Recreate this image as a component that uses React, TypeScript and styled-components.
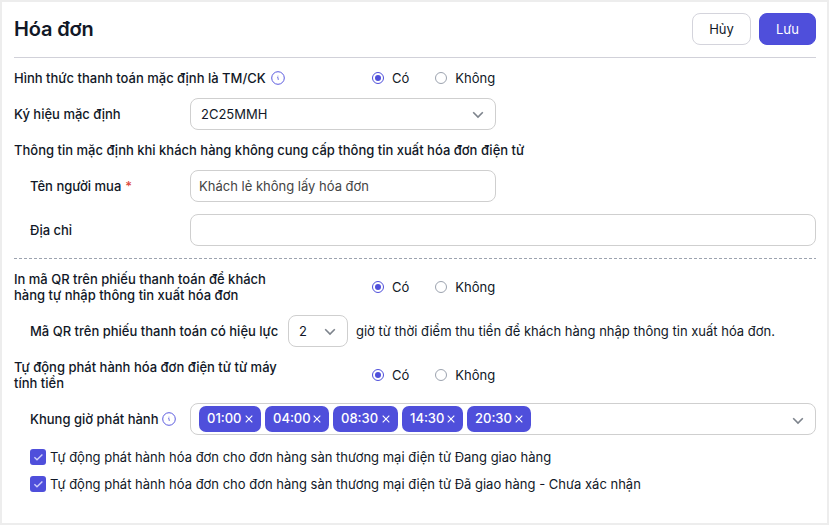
import React from "react";
import styled, { createGlobalStyle } from "styled-components";

const GlobalStyle = createGlobalStyle`
  * { box-sizing: border-box; }
  body { margin: 0; background: #ededed; }
  button, input { font: inherit; letter-spacing: inherit; }
`;

const Page = styled.main`
  width: 829px;
  height: 525px;
  padding: 0 11px 0 12px;
  border: 2px solid #ededed;
  background: #fff;
  color: #111827;
  font: 400 13px/16px Inter, "Noto Sans", sans-serif;
  white-space: nowrap;
  overflow: hidden;
`;

const Header = styled.header`
  display: flex;
  align-items: center;
  gap: 8px;
  height: 56px;
  padding-bottom: 1px;
  border-bottom: 1px solid #d1d1d9;
`;

const Title = styled.h1`
  margin: 0 auto 0 0;
  font-size: 20px;
  line-height: 28px;
  font-weight: 600;
  letter-spacing: -0.16px;
`;

const Button = styled.button<{ $primary?: boolean }>`
  width: ${(p) => (p.$primary ? 57 : 59)}px;
  height: 32px;
  padding: 0;
  border: 1px solid ${(p) => (p.$primary ? "#4d4dda" : "#d4d4dc")};
  border-radius: 8px;
  background: ${(p) => (p.$primary ? "#4f4fdb" : "#fff")};
  color: ${(p) => (p.$primary ? "#fff" : "#111827")};
  font-weight: 400;
`;

const Form = styled.form`
  display: flex;
  flex-direction: column;
`;

const Row = styled.div<{ $height?: number; $top: number; $indent?: boolean }>`
  display: flex;
  align-items: center;
  height: ${(p) => p.$height ?? 32}px;
  margin-top: ${(p) => p.$top}px;
  padding-left: ${(p) => (p.$indent ? 16 : 0)}px;
`;

const Label = styled.div<{ $width?: number }>`
  display: flex;
  align-items: center;
  flex: none;
  width: ${(p) => (p.$width ? p.$width + "px" : "auto")};
  font-weight: 500;
`;

const Required = styled.span`
  margin-left: 4px;
  color: #dc4a3d;
`;

const Info = styled.svg<{ $gap: number }>`
  flex: none;
  margin-left: ${(p) => p.$gap}px;
`;

const RadioGroup = styled.div`
  display: flex;
  gap: 26px;
`;

const RadioLabel = styled.label`
  display: flex;
  align-items: center;
  gap: 8px;
`;

const Dot = styled.span<{ $on?: boolean }>`
  display: grid;
  place-items: center;
  width: 12px;
  height: 12px;
  border: 1px solid ${(p) => (p.$on ? "#4f4fdb" : "#9ca3af")};
  border-radius: 50%;
  &::after {
    content: "";
    width: 6px;
    height: 6px;
    border-radius: 50%;
    background: ${(p) => (p.$on ? "#4f4fdb" : "transparent")};
  }
`;

const Field = styled.div<{ $width: number; $pad?: string }>`
  display: flex;
  align-items: center;
  justify-content: space-between;
  flex: none;
  width: ${(p) => p.$width}px;
  height: 32px;
  padding: ${(p) => p.$pad ?? "0 11px 0 10px"};
  border: 1px solid #cfcfcf;
  border-radius: 8px;
`;

const TextInput = styled.input<{ $width: number }>`
  width: ${(p) => p.$width}px;
  height: 32px;
  padding: 0 8px;
  border: 1px solid #cfcfcf;
  border-radius: 8px;
  outline: none;
  background: #fff;
  color: #444;
`;

const Divider = styled.hr`
  width: 100%;
  height: 1px;
  margin: 12px 0 0;
  border: 0;
  background: repeating-linear-gradient(to right, #9ca3af 0 3px, #fff 3px 5px);
`;

const Suffix = styled.span`
  margin-left: 8px;
  padding-bottom: 1px;
`;

const Tags = styled.div`
  display: flex;
  gap: 4px;
`;

const Tag = styled.span<{ $width: number }>`
  display: flex;
  align-items: center;
  justify-content: space-between;
  width: ${(p) => p.$width}px;
  height: 26px;
  padding: 0 8px 2px;
  border-radius: 7px;
  background: #4f4fdb;
  color: #fff;
  font-weight: 500;
`;

const CloseIcon = styled.svg`
  margin-top: 2px;
`;

const Arrow = styled.svg<{ $drop?: number }>`
  flex: none;
  margin-top: ${(p) => p.$drop ?? 1}px;
`;

const CheckLabel = styled.label`
  display: flex;
  align-items: center;
  gap: 4px;
`;

const Check = styled.span`
  display: grid;
  place-items: center;
  width: 16px;
  height: 16px;
  border-radius: 3px;
  background: #4f4fdb;
`;

const InfoIcon = ({ gap }: { gap: number }) => (
  <Info $gap={gap} width="14" height="14" viewBox="0 0 14 14" fill="none" stroke="#5b5bdf">
    <circle cx="7" cy="7" r="6.3" />
    <path d="M6.2 6.3h.7l.4 2.6M6.7 5.1h.6" strokeWidth="0.9" />
  </Info>
);

const Chevron = ({ drop }: { drop?: number }) => (
  <Arrow $drop={drop} width="12" height="8" viewBox="0 0 12 8" fill="none" stroke="#7d838c" strokeWidth="1.6">
    <path d="M1.2 1.2L6 6l4.8-4.8" />
  </Arrow>
);

const Close = () => (
  <CloseIcon width="8" height="8" viewBox="0 0 8 8" fill="none" stroke="#fff" strokeWidth="1.1">
    <path d="M.7.7l6.6 6.6M7.3.7L.7 7.3" />
  </CloseIcon>
);

const YesNo = () => (
  <RadioGroup>
    <RadioLabel><Dot $on />Có</RadioLabel>
    <RadioLabel><Dot />Không</RadioLabel>
  </RadioGroup>
);

const CheckRow = ({ top, children }: { top: number; children: React.ReactNode }) => (
  <Row $top={top} $height={16} $indent>
    <CheckLabel>
      <Check>
        <svg width="10" height="8" viewBox="0 0 10 8" fill="none" stroke="#cfcffa" strokeWidth="1.4">
          <path d="M1.4 4.2l2.6 2.6L9.4 1.4" />
        </svg>
      </Check>
      {children}
    </CheckLabel>
  </Row>
);

const times = [
  { time: "01:00", width: 62 },
  { time: "04:00", width: 64 },
  { time: "08:30", width: 65 },
  { time: "14:30", width: 61 },
  { time: "20:30", width: 64 },
];

export default function App() {
  return (
    <Page>
      <GlobalStyle />
      <Header>
        <Title>Hóa đơn</Title>
        <Button>Hủy</Button>
        <Button $primary>Lưu</Button>
      </Header>
      <Form>
        <Row $top={10} $height={20}>
          <Label $width={358}>Hình thức thanh toán mặc định là TM/CK<InfoIcon gap={5} /></Label>
          <YesNo />
        </Row>
        <Row $top={10}>
          <Label $width={176}>Ký hiệu mặc định</Label>
          <Field $width={306}>2C25MMH<Chevron /></Field>
        </Row>
        <Row $top={10} $height={20}>
          <Label>Thông tin mặc định khi khách hàng không cung cấp thông tin xuất hóa đơn điện tử</Label>
        </Row>
        <Row $top={10} $indent>
          <Label $width={160}>Tên người mua<Required>*</Required></Label>
          <TextInput $width={306} defaultValue="Khách lẻ không lấy hóa đơn" />
        </Row>
        <Row $top={12} $indent>
          <Label $width={160}>Địa chỉ</Label>
          <TextInput $width={626} />
        </Row>
        <Divider />
        <Row $top={12}>
          <Label $width={358}>In mã QR trên phiếu thanh toán để khách<br />hàng tự nhập thông tin xuất hóa đơn</Label>
          <YesNo />
        </Row>
        <Row $top={12} $indent>
          <Label $width={258}>Mã QR trên phiếu thanh toán có hiệu lực</Label>
          <Field $width={60}>2<Chevron /></Field>
          <Suffix>giờ từ thời điểm thu tiền để khách hàng nhập thông tin xuất hóa đơn.</Suffix>
        </Row>
        <Row $top={12}>
          <Label $width={358}>Tự động phát hành hóa đơn điện tử từ máy<br />tính tiền</Label>
          <YesNo />
        </Row>
        <Row $top={12} $indent>
          <Label $width={160}>Khung giờ phát hành<InfoIcon gap={3} /></Label>
          <Field $width={626} $pad="0 11px 0 8px">
            <Tags>
              {times.map((t) => (
                <Tag key={t.time} $width={t.width}>{t.time}<Close /></Tag>
              ))}
            </Tags>
            <Chevron drop={4} />
          </Field>
        </Row>
        <CheckRow top={14}>Tự động phát hành hóa đơn cho đơn hàng sàn thương mại điện tử Đang giao hàng</CheckRow>
        <CheckRow top={11}>Tự động phát hành hóa đơn cho đơn hàng sàn thương mại điện tử Đã giao hàng - Chưa xác nhận</CheckRow>
      </Form>
    </Page>
  );
}
